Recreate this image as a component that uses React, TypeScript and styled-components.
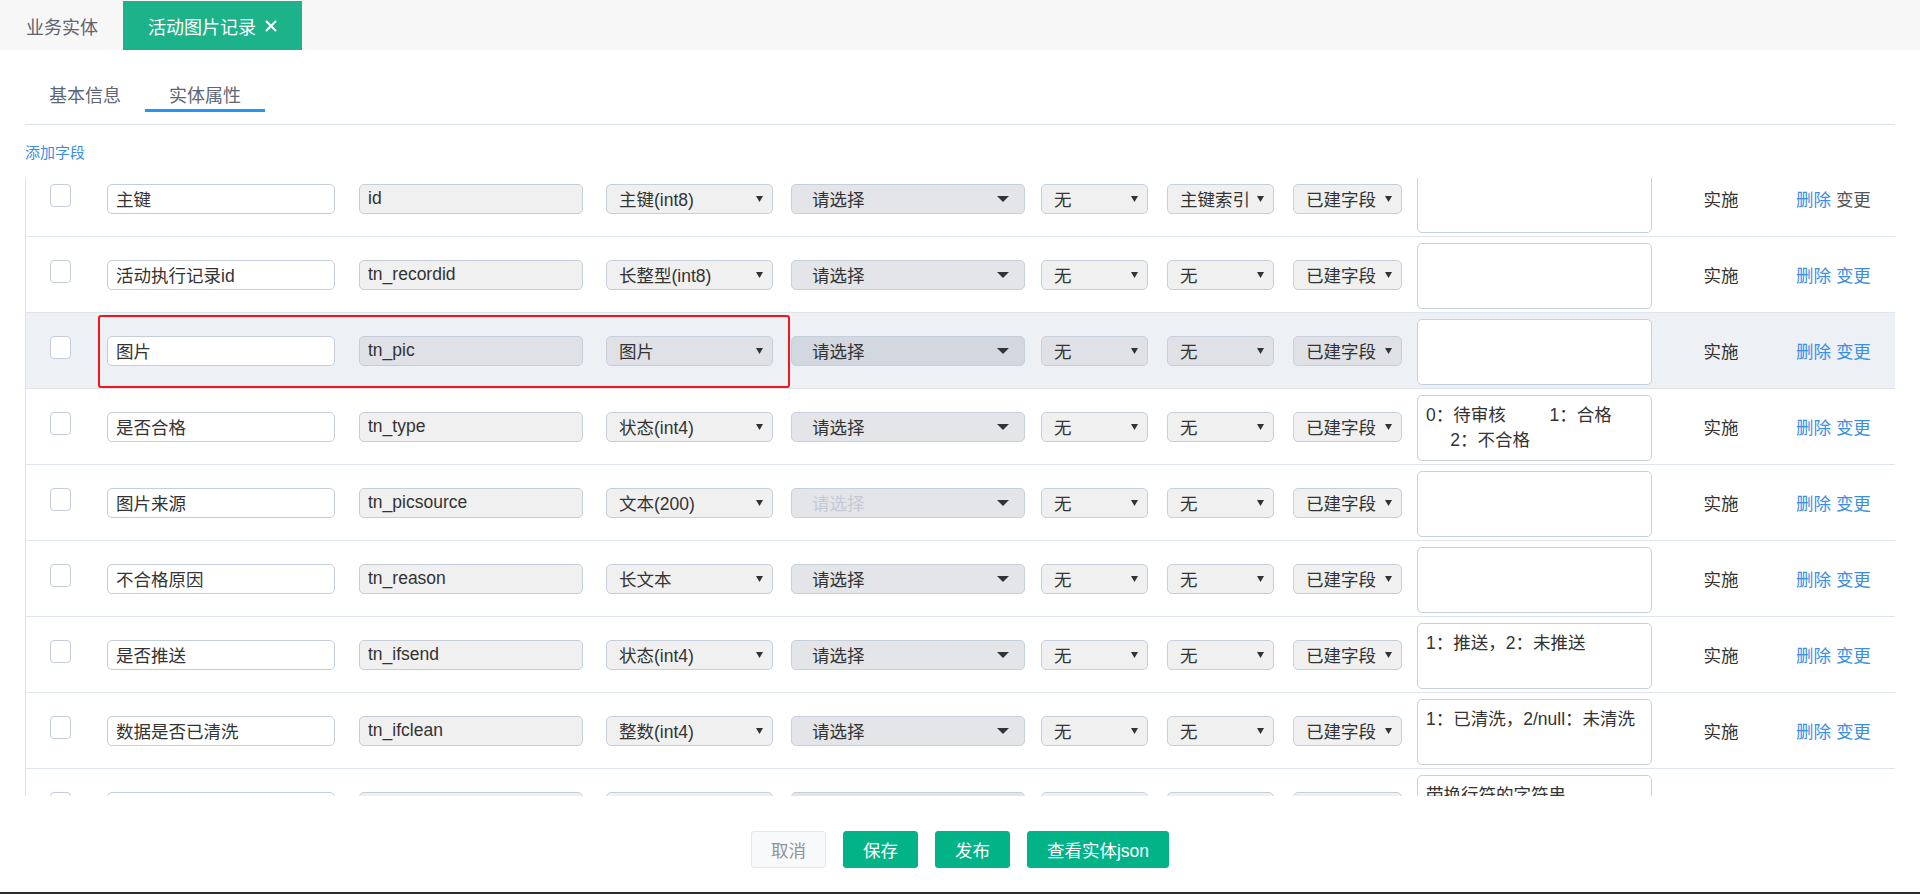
import React, { useLayoutEffect, useRef } from 'react';
import styled, { createGlobalStyle } from 'styled-components';

const GlobalStyle = createGlobalStyle`
  html, body { margin: 0; padding: 0; background: #fff; }
  body { font-family: "Liberation Sans", "Noto Sans CJK SC", sans-serif; color: #333; }
  *, *::before, *::after { box-sizing: border-box; }
`;

const Page = styled.div`
  height: 100vh;
  display: flex;
  flex-direction: column;
  overflow: hidden;
  border-bottom: 2px solid #2b2b2b;
`;

const TopBar = styled.div`
  height: 50px;
  flex: none;
  padding: 1px 0 0 1px;
  background: #f7f7f7;
  display: flex;
  align-items: stretch;
`;

const TopTab = styled.div<{ $active?: boolean }>`
  display: flex;
  align-items: center;
  padding: 0 25px;
  font-size: 18px;
  background: ${p => (p.$active ? '#1db38a' : 'transparent')};
  color: ${p => (p.$active ? '#fff' : '#5f6470')};
`;

const CloseIcon = styled.svg`
  margin-left: 9px;
  width: 12px;
  height: 12px;
`;

const Main = styled.div`
  flex: 1;
  min-height: 0;
  display: flex;
  flex-direction: column;
  padding: 0 25px;
`;

const SubTabs = styled.div`
  margin-top: 34px;
  display: flex;
  padding-bottom: 12px;
  border-bottom: 1px solid #d9e1ea;
`;

const SubTab = styled.div<{ $active?: boolean }>`
  width: 120px;
  height: 28px;
  line-height: 25px;
  text-align: center;
  font-size: 18px;
  color: #5f6673;
  border-bottom: 3px solid ${p => (p.$active ? '#2196f3' : 'transparent')};
`;

const AddField = styled.a`
  margin-top: 18px;
  align-self: flex-start;
  font-size: 15px;
  line-height: 20px;
  color: #3a8ee6;
  cursor: pointer;
`;

const TableScroll = styled.div`
  margin-top: 15px;
  height: 618px;
  flex: none;
  overflow-y: scroll;
  border-left: 1px solid #dce3eb;
  &::-webkit-scrollbar { width: 13px; }
  &::-webkit-scrollbar-track { background: #f1f1f1; }
  &::-webkit-scrollbar-thumb {
    background: #c8c8c8;
    border: 1px solid #f1f1f1;
    border-radius: 6px;
  }
`;

const HeadSpacer = styled.div`
  height: 45px;
  border-bottom: 1px solid #dfe5ec;
  background: #fff;
`;

const Row = styled.div<{ $highlight?: boolean }>`
  position: relative;
  display: grid;
  grid-template-columns: 57px 252px 247px 185px 250px 126px 126px 124px 263px 82px 1fr;
  align-items: center;
  padding-left: 24px;
  height: 76px;
  border-bottom: 1px solid #dfe5ec;
  background: ${p => (p.$highlight ? '#edf0f5' : '#fff')};
  font-size: 17.5px;
  color: #333;
`;

const Checkbox = styled.span`
  display: block;
  width: 21px;
  height: 23px;
  margin-bottom: 6px;
  border: 1px solid #c3ccd8;
  border-radius: 4px;
  background: #fff;
`;

const TextInput = styled.input<{ $w: number; $locked?: boolean }>`
  width: ${p => p.$w}px;
  height: 30px;
  padding: 0 8px;
  border: 1px solid #c4cedb;
  border-radius: 5px;
  background: ${p => (p.$locked ? 'rgba(0,0,0,0.06)' : '#fff')};
  font: inherit;
  font-size: 17.5px;
  color: #333;
  outline: none;
`;

const SelectBox = styled.div<{ $w: number; $wide?: boolean; $disabled?: boolean }>`
  width: ${p => p.$w}px;
  height: 30px;
  display: flex;
  align-items: center;
  justify-content: space-between;
  padding: ${p => (p.$wide ? '0 15px 0 20px' : '0 9px 0 12px')};
  border: 1px solid #c6d0dc;
  border-radius: 5px;
  background: ${p => (p.$wide ? 'rgba(0,18,55,0.11)' : 'rgba(0,0,0,0.06)')};
  color: ${p => (p.$disabled ? '#c3cbd6' : '#333')};
  white-space: nowrap;
  overflow: hidden;
`;

const Caret = styled.svg`
  flex: none;
`;

const Memo = styled.textarea`
  width: 235px;
  height: 66px;
  margin-top: 3px;
  padding: 7px 8px;
  border: 1px solid #c6d0dc;
  border-radius: 5px;
  background: #fff;
  font: inherit;
  font-size: 17.5px;
  line-height: 25px;
  color: #333;
  resize: none;
  overflow: hidden;
  outline: none;
`;

const Status = styled.div`
  text-align: center;
`;

const Ops = styled.div`
  padding-left: 34px;
  white-space: nowrap;
`;

const OpLink = styled.span<{ $muted?: boolean }>`
  color: ${p => (p.$muted ? '#555' : '#3a8ee6')};
  cursor: pointer;
`;

const Mark = styled.div`
  position: absolute;
  left: 72px;
  top: 2px;
  width: 692px;
  height: 73px;
  border: 2px solid #f5141e;
  border-radius: 3px;
  pointer-events: none;
`;

const Footer = styled.div`
  padding-top: 35px;
  display: flex;
  justify-content: center;
  gap: 17px;
`;

const Button = styled.button<{ $primary?: boolean }>`
  height: 37px;
  padding: 0 19px;
  border-radius: 3px;
  font: inherit;
  font-size: 17.5px;
  cursor: pointer;
  border: 1px solid ${p => (p.$primary ? '#03b388' : '#e4e7ec')};
  background: ${p => (p.$primary ? '#03b388' : '#f8f9fa')};
  color: ${p => (p.$primary ? '#fff' : '#8f939c')};
`;

type Field = {
  name: string;
  code: string;
  type: string;
  index: string;
  memo: string;
  disabledDict?: boolean;
  highlight?: boolean;
  lockChange?: boolean;
};

const fields: Field[] = [
  { name: '主键', code: 'id', type: '主键(int8)', index: '主键索引', memo: '', lockChange: true },
  { name: '活动执行记录id', code: 'tn_recordid', type: '长整型(int8)', index: '无', memo: '' },
  { name: '图片', code: 'tn_pic', type: '图片', index: '无', memo: '', highlight: true },
  { name: '是否合格', code: 'tn_type', type: '状态(int4)', index: '无', memo: '0：待审核         1：合格\n     2：不合格' },
  { name: '图片来源', code: 'tn_picsource', type: '文本(200)', index: '无', memo: '', disabledDict: true },
  { name: '不合格原因', code: 'tn_reason', type: '长文本', index: '无', memo: '' },
  { name: '是否推送', code: 'tn_ifsend', type: '状态(int4)', index: '无', memo: '1：推送，2：未推送' },
  { name: '数据是否已清洗', code: 'tn_ifclean', type: '整数(int4)', index: '无', memo: '1：已清洗，2/null：未清洗' },
  { name: '数据清洗说明', code: 'tn_cleannote', type: '文本(200)', index: '无', memo: '带换行符的字符串' },
  { name: '创建时间', code: 'tn_createtime', type: '时间', index: '无', memo: '' },
];

const SmallCaret = () => (
  <Caret width="7" height="6" viewBox="0 0 7 6">
    <path d="M0 0H7L3.5 6Z" fill="#333" />
  </Caret>
);

const WideCaret = () => (
  <Caret width="12" height="6" viewBox="0 0 12 6">
    <path d="M0 0H12L6 6Z" fill="#333" />
  </Caret>
);

function Select({ w, value, wide, disabled }: { w: number; value: string; wide?: boolean; disabled?: boolean }) {
  return (
    <SelectBox $w={w} $wide={wide} $disabled={disabled}>
      <span>{value}</span>
      {wide ? <WideCaret /> : <SmallCaret />}
    </SelectBox>
  );
}

export default function App() {
  const scrollRef = useRef<HTMLDivElement>(null);
  useLayoutEffect(() => {
    if (scrollRef.current) scrollRef.current.scrollTop = 62;
  }, []);

  return (
    <>
      <GlobalStyle />
      <Page>
        <TopBar>
          <TopTab>业务实体</TopTab>
          <TopTab $active>
            活动图片记录
            <CloseIcon viewBox="0 0 12 12">
              <path d="M1.5 1.5L10.5 10.5M10.5 1.5L1.5 10.5" stroke="#fff" strokeWidth="2" strokeLinecap="round" />
            </CloseIcon>
          </TopTab>
        </TopBar>
        <Main>
          <SubTabs>
            <SubTab>基本信息</SubTab>
            <SubTab $active>实体属性</SubTab>
          </SubTabs>
          <AddField>添加字段</AddField>
          <TableScroll ref={scrollRef}>
            <HeadSpacer />
            {fields.map(f => (
              <Row key={f.code} $highlight={f.highlight}>
                <Checkbox />
                <TextInput $w={228} defaultValue={f.name} />
                <TextInput $w={224} $locked readOnly defaultValue={f.code} />
                <Select w={167} value={f.type} />
                <Select w={234} value="请选择" wide disabled={f.disabledDict} />
                <Select w={107} value="无" />
                <Select w={107} value={f.index} />
                <Select w={109} value="已建字段" />
                <Memo defaultValue={f.memo} />
                <Status>实施</Status>
                <Ops>
                  <OpLink>删除</OpLink> <OpLink $muted={f.lockChange}>变更</OpLink>
                </Ops>
                {f.highlight && <Mark />}
              </Row>
            ))}
          </TableScroll>
          <Footer>
            <Button>取消</Button>
            <Button $primary>保存</Button>
            <Button $primary>发布</Button>
            <Button $primary>查看实体json</Button>
          </Footer>
        </Main>
      </Page>
    </>
  );
}
